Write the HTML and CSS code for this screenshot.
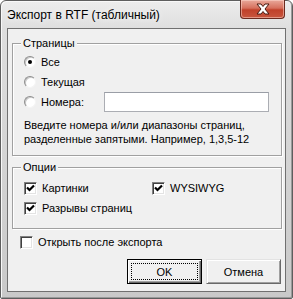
FILE: index.html
```html
<!DOCTYPE html>
<html lang="ru">
<head>
  <meta charset="UTF-8">
  <title>Экспорт в RTF (табличный)</title>
  <link rel="stylesheet" href="styles.css">
</head>
<body>
  <div class="window">
    <div class="titlebar">
      <span class="title">Экспорт в RTF (табличный)</span>
      <span class="close">
        <svg width="16" height="12" viewBox="0 0 16 12">
          <path d="M2 1 L6 1 L8 3.5 L10 1 L14 1 L10 6 L14 11 L10 11 L8 8.5 L6 11 L2 11 L6 6 Z" fill="#fff" stroke="#4a1a10" stroke-width="1" stroke-linejoin="round"/>
        </svg>
      </span>
    </div>

    <div class="client">
      <fieldset class="group pages">
        <legend>Страницы</legend>
        <div class="row"><span class="radio checked"></span><span>Все</span></div>
        <div class="row"><span class="radio"></span><span>Текущая</span></div>
        <div class="row"><span class="radio"></span><span class="num-label">Номера:</span><span class="edit"></span></div>
        <p class="hint">Введите номера и/или диапазоны страниц,<br>разделенные запятыми. Например, 1,3,5-12</p>
      </fieldset>

      <fieldset class="group options">
        <legend>Опции</legend>
        <div class="opts">
          <div class="row"><span class="check checked"></span><span>Картинки</span></div>
          <div class="row"><span class="check checked"></span><span>WYSIWYG</span></div>
          <div class="row"><span class="check checked"></span><span>Разрывы страниц</span></div>
        </div>
      </fieldset>

      <div class="row open-after"><span class="check"></span><span>Открыть после экспорта</span></div>

      <div class="buttons">
        <button class="btn default"><span>OK</span></button>
        <button class="btn"><span>Отмена</span></button>
      </div>
    </div>
  </div>
</body>
</html>
```

FILE: styles.css
```css
body {
  margin: 0;
  background: #fff;
  font-family: "Liberation Sans", Arial, sans-serif;
  font-size: 11px;
  color: #000;
}

.window {
  width: 293px;
  height: 299px;
  box-sizing: border-box;
  border: 1px solid #5e5e5e;
  border-radius: 6px 6px 2px 2px;
  background: linear-gradient(to bottom, #ececec 0, #dedede 28px, #c9c9c9 100%);
  box-shadow: inset 1px 1px 0 #f8f8f8, inset -1px -1px 0 #9a9a9a;
  padding: 0 6px 6px 6px;
  display: flex;
  flex-direction: column;
}

.titlebar {
  height: 27px;
  display: flex;
  justify-content: space-between;
  align-items: flex-start;
}

.title {
  align-self: center;
  font-size: 12px;
  margin-top: 1px;
  text-shadow: 0 0 6px #fff;
}

.close {
  width: 45px;
  height: 19px;
  margin-top: -1px;
  margin-right: 1px;
  box-sizing: border-box;
  border: 1px solid #6b2a1f;
  border-top: none;
  border-radius: 0 0 4px 4px;
  background: linear-gradient(to bottom, #e9a99b 0, #d6705d 45%, #c0412a 55%, #c8563e 100%);
  box-shadow: inset 0 0 0 1px rgba(255, 220, 210, 0.5);
  display: flex;
  justify-content: center;
  align-items: center;
}

.client {
  flex: 1;
  background: #f0f0f0;
  border: 1px solid #707070;
  display: flex;
  flex-direction: column;
}

.group {
  margin: 8px 3px 0 4px;
  padding: 2px 10px 9px 11px;
  border: 1px solid #a0a0a0;
  box-shadow: 1px 1px 0 #fff, inset 1px 1px 0 #fff;
}

.group legend {
  padding: 0 2px;
  margin-left: -3px;
  line-height: 13px;
  background: #f0f0f0;
}

.row {
  height: 20px;
  display: flex;
  align-items: center;
}

.radio {
  width: 12px;
  height: 12px;
  box-sizing: border-box;
  border-radius: 50%;
  border: 1px solid;
  border-color: #8d8d8d #f4f4f4 #f4f4f4 #8d8d8d;
  background: #fff;
  box-shadow: inset 1px 1px 0 #c8c8c8;
  margin-right: 5px;
  display: flex;
  justify-content: center;
  align-items: center;
}

.radio.checked::before {
  content: "";
  width: 4px;
  height: 4px;
  border-radius: 50%;
  background: #000;
}

.num-label {
  width: 63px;
}

.edit {
  width: 165px;
  height: 20px;
  box-sizing: border-box;
  border: 1px solid #abadb3;
  border-top-color: #9a9ea6;
  background: #fff;
}

.hint {
  margin: 6px 0 0 0;
  line-height: 14px;
}

.options {
  margin-top: 5px;
  padding-top: 4px;
  padding-bottom: 10px;
}

.opts {
  display: grid;
  grid-template-columns: 128px 1fr;
}

.check {
  width: 13px;
  height: 13px;
  box-sizing: border-box;
  border: 1px solid;
  border-color: #808080 #fff #fff #808080;
  box-shadow: inset 1px 1px 0 #404040, inset -1px -1px 0 #e3e3e3;
  background: #fff;
  margin-right: 5px;
}

.check.checked {
  background: #fff url("data:image/svg+xml,%3Csvg xmlns='http://www.w3.org/2000/svg' width='11' height='11'%3E%3Cpath d='M2 4.5 L4.5 7 L9 2.5' fill='none' stroke='%23000' stroke-width='2.2'/%3E%3C/svg%3E") no-repeat 0 0;
}

.open-after {
  margin: 3px 0 0 12px;
}

.buttons {
  display: flex;
  justify-content: flex-end;
  gap: 4px;
  margin: 7px 4px 0 0;
}

.btn {
  width: 75px;
  height: 25px;
  box-sizing: border-box;
  padding: 3px;
  font: inherit;
  color: #000;
  background: #f0f0f0;
  border: 1px solid;
  border-color: #e3e3e3 #696969 #696969 #e3e3e3;
  box-shadow: inset 1px 1px 0 #fff, inset -1px -1px 0 #a0a0a0;
  display: flex;
}

.btn span {
  flex: 1;
  border: 1px dotted transparent;
  display: flex;
  justify-content: center;
  align-items: center;
}

.btn.default {
  border-color: #000;
  box-shadow: inset 1px 1px 0 #fff, inset -1px -1px 0 #696969, inset -2px -2px 0 #a0a0a0;
}

.btn.default span {
  border-color: #000;
}
```
